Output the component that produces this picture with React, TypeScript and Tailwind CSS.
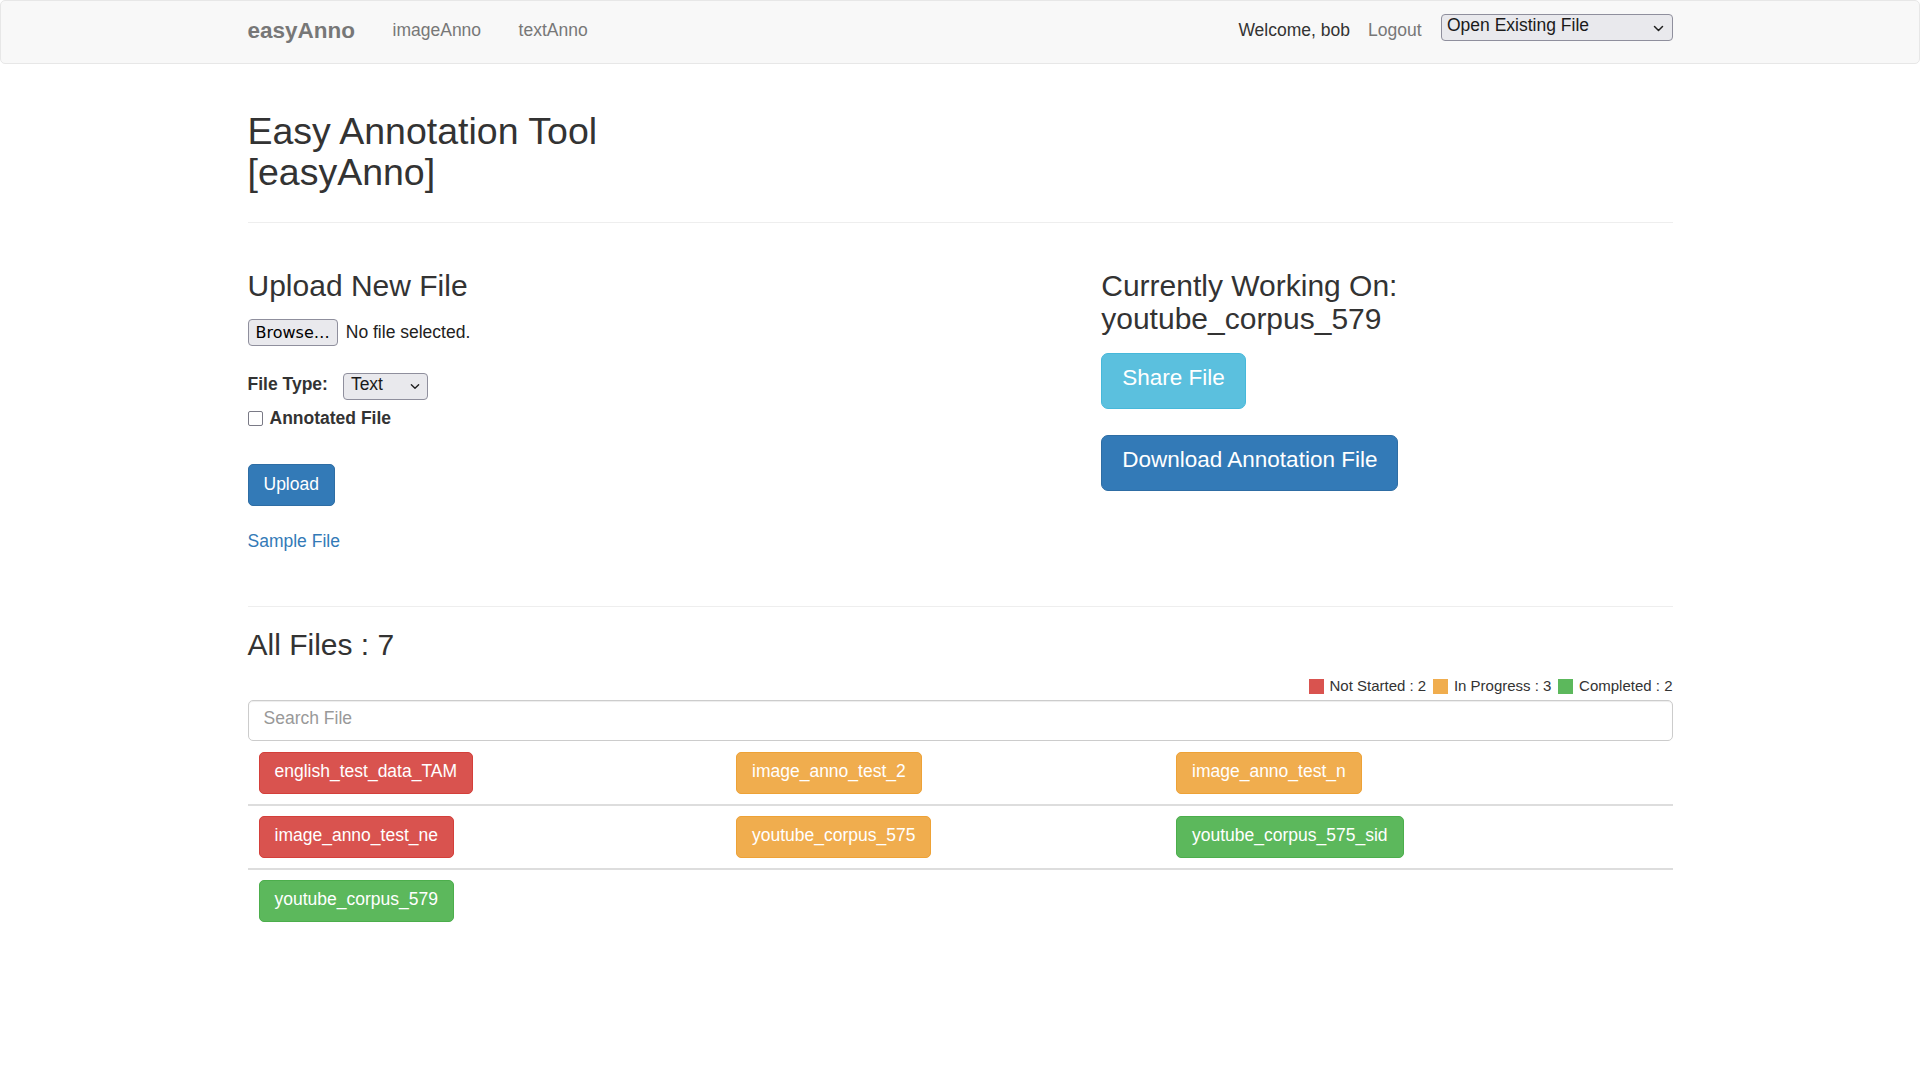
import React from "react";

const Chevron = ({ w = 11 }: { w?: number }) => (
  <svg width={w} height={7} viewBox="0 0 11 7" fill="none" className="shrink-0">
    <path d="M1.5 1.5l4 4 4-4" stroke="#1f1f1f" strokeWidth="1.5" strokeLinecap="round" strokeLinejoin="round" />
  </svg>
);

type Status = "red" | "orange" | "green";

const btnClass: Record<Status, string> = {
  red: "bg-[#d9534f] border-[#d43f3a]",
  orange: "bg-[#f0ad4e] border-[#eea236]",
  green: "bg-[#5cb85c] border-[#4cae4c]",
};

const FileBtn = ({ name, s }: { name: string; s: Status }) => (
  <button
    className={`h-[42px] px-[15px] pb-[3px] border rounded-[5px] text-white text-[17.5px] leading-[25px] whitespace-nowrap ${btnClass[s]}`}
  >
    {name}
  </button>
);

const rows: { name: string; s: Status }[][] = [
  [
    { name: "english_test_data_TAM", s: "red" },
    { name: "image_anno_test_2", s: "orange" },
    { name: "image_anno_test_n", s: "orange" },
  ],
  [
    { name: "image_anno_test_ne", s: "red" },
    { name: "youtube_corpus_575", s: "orange" },
    { name: "youtube_corpus_575_sid", s: "green" },
  ],
  [{ name: "youtube_corpus_579", s: "green" }],
];

export default function App() {
  return (
    <div className="min-h-screen bg-white font-['Liberation_Sans',Arial,Helvetica,sans-serif] text-[17.5px] leading-[25px] text-[#333333]">
      {/* Navbar */}
      <nav className="h-[64px] box-border border border-[#e7e7e7] bg-[#f8f8f8] rounded-[5px]">
        <div className="mx-auto w-[1425px] flex items-start h-full">
          <span className="mt-[16.6px] text-[22.5px] leading-[25px] font-bold text-[#777777]">easyAnno</span>
          <a className="ml-[37.5px] mt-[17px] text-[#777777]">imageAnno</a>
          <a className="ml-[37.5px] mt-[17px] text-[#777777]">textAnno</a>
          <span className="ml-auto mt-[17px] text-[#333333]">Welcome, bob</span>
          <a className="ml-[18px] mt-[17px] text-[#777777]">Logout</a>
          <div className="ml-[19px] mt-[13.3px] w-[232px] h-[26.5px] box-border border border-[#8f8f9d] rounded-[4px] bg-[#e9e9ed] flex items-start justify-between pl-[5.5px] pr-[8px] pt-[1px]">
            <span className="text-[17.5px] leading-[18px] text-[#1a1a1a]">Open Existing File</span>
            <span className="self-center">
              <Chevron w={11} />
            </span>
          </div>
        </div>
      </nav>

      <main className="mx-auto w-[1425px]">
        <h2 className="mt-[46.5px] w-[450px] text-[37.5px] leading-[41.25px] font-normal">
          Easy Annotation Tool [easyAnno]
        </h2>
        <div className="mt-[28.5px] border-t border-[#eeeeee]" />

        <div className="mt-[46px] flex">
          {/* Left column */}
          <div className="w-[853.75px] shrink-0">
            <h3 className="text-[30px] leading-[33px] font-normal">Upload New File</h3>
            <div className="mt-[17.5px] flex items-center h-[27px]">
              <button className="h-[27px] px-[7px] box-border border border-[#8f8f9d] rounded-[4px] bg-[#e9e9ed] font-['DejaVu_Sans',sans-serif] text-[16px] leading-[20px] text-black">
                Browse…
              </button>
              <span className="ml-[8px] text-[#222222]">No file selected.</span>
            </div>
            <div className="mt-[25.5px] h-[28px] flex items-start">
              <span className="font-bold">File Type:</span>
              <div className="ml-[15.3px] mt-[1.5px] w-[85px] h-[26.5px] box-border border border-[#8f8f9d] rounded-[4px] bg-[#e9e9ed] flex items-start justify-between pl-[6.7px] pr-[7px] pt-[1px]">
                <span className="text-[17.5px] leading-[18px] text-[#1a1a1a]">Text</span>
                <span className="self-center">
                  <Chevron w={10} />
                </span>
              </div>
            </div>
            <div className="mt-[6px] flex items-start">
              <span className="mt-[5.5px] w-[15px] h-[15px] box-border border-[1.5px] border-[#7a7a86] rounded-[2px] bg-white" />
              <span className="ml-[7px] font-bold">Annotated File</span>
            </div>
            <button className="mt-[33.5px] h-[42px] px-[15px] pb-[2px] border border-[#2e6da4] bg-[#337ab7] rounded-[5px] text-white text-[17.5px] leading-[25px] block">
              Upload
            </button>
            <a className="mt-[22.5px] block text-[#337ab7]">Sample File</a>
          </div>

          {/* Right column */}
          <div className="flex-1">
            <h3 className="text-[30px] leading-[33px] font-normal">
              Currently Working On:
              <br />
              youtube_corpus_579
            </h3>
            <button className="mt-[18px] h-[56px] px-[20px] pb-[5px] border border-[#46b8da] bg-[#5bc0de] rounded-[7px] text-white text-[22.5px] leading-[30px] block">
              Share File
            </button>
            <button className="mt-[26px] h-[56.5px] px-[20px] pb-[5px] border border-[#2e6da4] bg-[#337ab7] rounded-[7px] text-white text-[22.5px] leading-[30px] block">
              Download Annotation File
            </button>
          </div>
        </div>

        <div className="mt-[52.5px] border-t border-[#eeeeee]" />

        <h3 className="mt-[21px] text-[30px] leading-[33px] font-normal">All Files : 7</h3>

        <div className="mt-[13.5px] flex justify-end items-start text-[15px] leading-[21px] text-[#333333]">
          <span className="mt-[4px] w-[15px] h-[15px] bg-[#d9534f]" />
          <span className="ml-[5.7px]">Not Started : 2</span>
          <span className="ml-[7px] mt-[4px] w-[15px] h-[15px] bg-[#f0ad4e]" />
          <span className="ml-[5.7px]">In Progress : 3</span>
          <span className="ml-[7px] mt-[4px] w-[15px] h-[15px] bg-[#5cb85c]" />
          <span className="ml-[5.7px]">Completed : 2</span>
        </div>

        <input
          placeholder="Search File"
          className="mt-[4px] block w-full h-[41.6px] box-border border border-[#cccccc] rounded-[5px] px-[15px] pt-0 pb-[3px] text-[17.5px] text-[#555555] placeholder:text-[#999999] shadow-[inset_0_1px_1px_rgba(0,0,0,0.075)] outline-none bg-white"
        />

        <div className="pt-[1px]">
          {rows.map((r, i) => (
            <div
              key={i}
              className={`grid grid-cols-[478.5px_440px_1fr] py-[10px] ${i > 0 ? "border-t-2 border-[#dddddd]" : ""}`}
            >
              {[0, 1, 2].map((c) => (
                <div key={c} className={c === 0 ? "pl-[11px]" : "pl-[10px]"}>
                  {r[c] ? <FileBtn name={r[c].name} s={r[c].s} /> : null}
                </div>
              ))}
            </div>
          ))}
        </div>
      </main>
    </div>
  );
}
